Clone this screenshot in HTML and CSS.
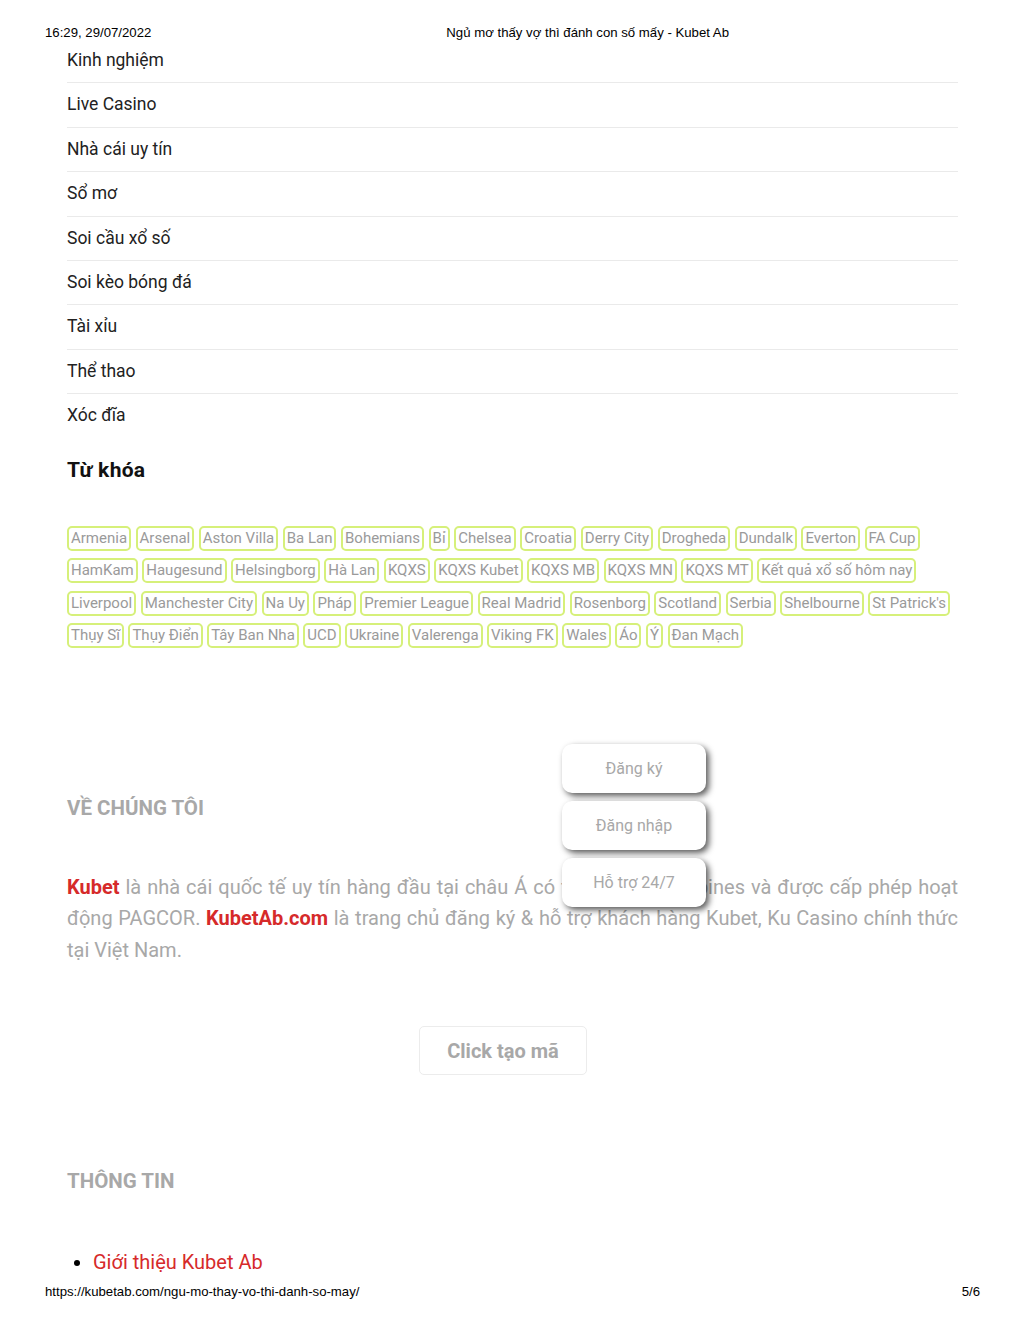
FILE: index.html
```
<!DOCTYPE html>
<html lang="vi">
  <head>
    <meta charset="UTF-8" />
    <meta name="viewport" content="width=device-width, initial-scale=1.0" />
    <title>Ngủ mơ thấy vợ thì đánh con số mấy - Kubet Ab</title>
    <link rel="stylesheet" href="styles.css">
  </head>
  <body>
    <div class="print-header">
      <span>16:29, 29/07/2022</span>
      <span class="print-title">Ngủ mơ thấy vợ thì đánh con số mấy - Kubet Ab</span>
    </div>

    <div class="content">
      <ul class="danh-muc">
        <li>Kinh nghiệm</li>
        <li>Live Casino</li>
        <li>Nhà cái uy tín</li>
        <li>Sổ mơ</li>
        <li>Soi cầu xổ số</li>
        <li>Soi kèo bóng đá</li>
        <li>Tài xỉu</li>
        <li>Thể thao</li>
        <li>Xóc đĩa</li>
      </ul>

      <h3 class="tu-khoa">Từ khóa</h3>

      <div class="tags">
        <a>Armenia</a><a>Arsenal</a><a>Aston Villa</a><a>Ba Lan</a><a>Bohemians</a><a>Bỉ</a><a>Chelsea</a><a>Croatia</a><a>Derry City</a><a>Drogheda</a><a>Dundalk</a><a>Everton</a><a>FA Cup</a>
        <a>HamKam</a><a>Haugesund</a><a>Helsingborg</a><a>Hà Lan</a><a>KQXS</a><a>KQXS Kubet</a><a>KQXS MB</a><a>KQXS MN</a><a>KQXS MT</a><a>Kết quả xổ số hôm nay</a>
        <a>Liverpool</a><a>Manchester City</a><a>Na Uy</a><a>Pháp</a><a>Premier League</a><a>Real Madrid</a><a>Rosenborg</a><a>Scotland</a><a>Serbia</a><a>Shelbourne</a><a>St Patrick's</a>
        <a>Thụy Sĩ</a><a>Thụy Điển</a><a>Tây Ban Nha</a><a>UCD</a><a>Ukraine</a><a>Valerenga</a><a>Viking FK</a><a>Wales</a><a>Áo</a><a>Ý</a><a>Đan Mạch</a>
      </div>

      <h4 class="footer-title ve-chung-toi">VỀ CHÚNG TÔI</h4>
      <p class="gioi-thieu">
        <b class="do">Kubet</b> là nhà cái quốc tế uy tín hàng đầu tại châu Á có trụ sở tại Philippines và được cấp phép hoạt động PAGCOR. <b class="do">KubetAb.com</b> là trang chủ đăng ký &amp; hỗ trợ khách hàng Kubet, Ku Casino chính thức tại Việt Nam.
      </p>

      <div class="tao-ma">
        <button class="btn-tao-ma">Click tạo mã</button>
      </div>

      <h4 class="footer-title thong-tin">THÔNG TIN</h4>
      <ul class="lien-ket">
        <li><a>Giới thiệu Kubet Ab</a></li>
      </ul>
    </div>

    <div class="nut-noi">
      <button>Đăng ký</button>
      <button>Đăng nhập</button>
      <button>Hỗ trợ 24/7</button>
    </div>

    <div class="print-footer">
      <span>https://kubetab.com/ngu-mo-thay-vo-thi-danh-so-may/</span>
      <span>5/6</span>
    </div>
  </body>
</html>
```

FILE: styles.css
```
body {
  margin: 0;
  font-family: Roboto, "Liberation Sans", sans-serif;
  background-color: #ffffff;
  color: #222;
  height: 1325px;
  position: relative;
  overflow: hidden;
}

.print-header {
  display: flex;
  height: 39px;
  box-sizing: border-box;
  padding: 25px 45px 0 45px;
  font-family: "Liberation Sans", Arial, sans-serif;
  font-size: 13.2px;
  line-height: 15px;
  color: #000;
}

.print-title {
  margin-left: 295px;
}

.content {
  width: 891px;
  margin-left: 67px;
}

.danh-muc {
  list-style: none;
  margin: 0;
  padding: 0;
}

.danh-muc li {
  font-size: 17.5px;
  line-height: 23.4px;
  padding: 10px 0;
  border-bottom: 1px solid #eaeaea;
  color: #222;
}

.danh-muc li:last-child {
  border-bottom: none;
}

.tu-khoa {
  font-size: 21px;
  font-weight: bold;
  margin: 18px 0 0 0;
  line-height: 28px;
  color: #111;
  letter-spacing: 0.3px;
}

.tags {
  margin-top: 42px;
  line-height: 0;
}

.tags a {
  display: inline-block;
  font-size: 15px;
  line-height: 21px;
  padding: 0 2px;
  margin: 0 4.5px 7.5px 0;
  color: #9a9a9a;
  border: 2px solid #d6f07a;
  border-radius: 5px;
}

.footer-title {
  font-size: 20.5px;
  font-weight: bold;
  color: #a8a8a8;
  margin: 0;
  line-height: 24px;
}

.ve-chung-toi {
  margin-top: 140px;
}

.gioi-thieu {
  margin: 52px 0 0 0;
  font-size: 20px;
  line-height: 31.6px;
  color: #a8a8a8;
  text-align: justify;
}

.do {
  color: #d62a2a;
}

.tao-ma {
  display: flex;
  justify-content: center;
  margin-top: 60px;
}

.btn-tao-ma {
  font-family: Roboto, sans-serif;
  font-size: 20px;
  font-weight: bold;
  color: #a8a8a8;
  background: #fff;
  border: 1px solid #ececec;
  border-radius: 5px;
  width: 168px;
  height: 49px;
  margin-right: 19px;
}

.thong-tin {
  margin-top: 94px;
}

.lien-ket {
  margin: 56px 0 0 0;
  padding-left: 26px;
  font-size: 20px;
  line-height: 26px;
}

.lien-ket li::marker {
  color: #000;
}

.lien-ket a {
  color: #d62a2a;
}

/* nút nổi bên phải */
.nut-noi {
  position: absolute;
  left: 562px;
  top: 744px;
  display: flex;
  flex-direction: column;
  gap: 8px;
}

.nut-noi button {
  width: 144px;
  height: 49px;
  background: #fff;
  border: none;
  border-radius: 10px;
  box-shadow: 3px 3px 6px rgba(0, 0, 0, 0.65);
  font-family: Roboto, sans-serif;
  font-size: 16px;
  color: #a8a8a8;
}

.print-footer {
  position: absolute;
  left: 45px;
  right: 44px;
  top: 1284px;
  display: flex;
  justify-content: space-between;
  font-family: "Liberation Sans", Arial, sans-serif;
  font-size: 13.2px;
  line-height: 15px;
  color: #000;
}
```
